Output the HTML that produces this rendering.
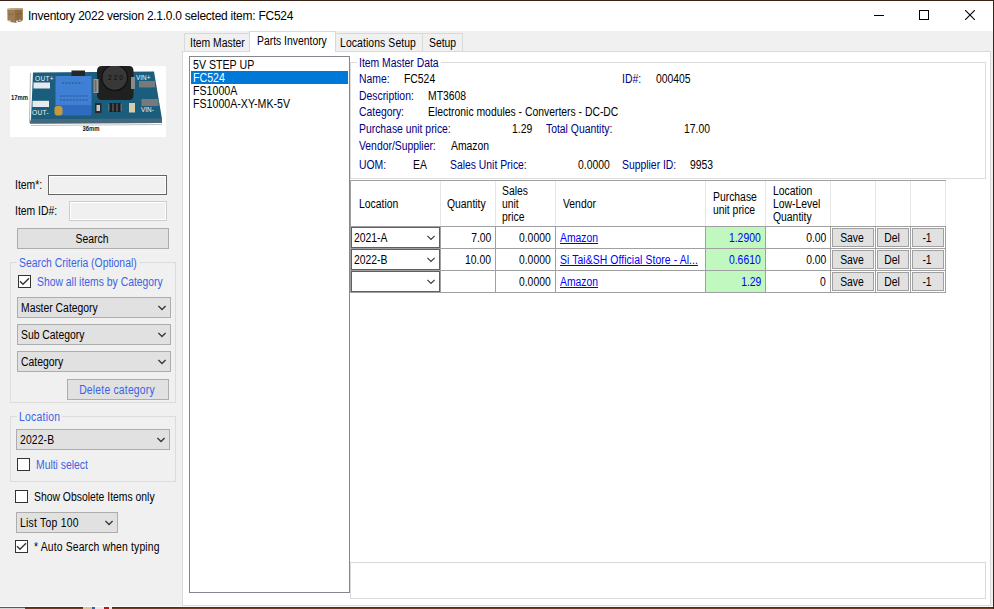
<!DOCTYPE html>
<html><head><meta charset="utf-8">
<style>
*{margin:0;padding:0;box-sizing:border-box}
html,body{width:994px;height:609px;overflow:hidden;background:#4a2a18;font-family:"Liberation Sans",sans-serif;font-size:12px;color:#000}
.a{position:absolute}
.t{position:absolute;white-space:nowrap;line-height:13px;letter-spacing:0px;transform:scaleX(0.865);transform-origin:0 0}
.r{transform-origin:100% 0}
.c{transform-origin:50% 0}
.blue{color:#3b63e3}
.nav{color:#000080}
.lnk{color:#0000ff;text-decoration:underline}
.blu2{color:#0000ff}
</style></head><body>
<div class="a" style="left:0;top:607px;width:994px;height:2px;background:linear-gradient(#4a2410,#7a4424)"></div>
<div class="a" style="left:0;top:607px;width:25px;height:2px;background:linear-gradient(#5a5a5a 50%,#d4d4d4 50%)"></div>
<div class="a" style="left:83px;top:607px;width:9px;height:2px;background:#d8c890"></div>
<div class="a" style="left:92px;top:607px;width:3px;height:2px;background:#3060b0"></div>
<div class="a" style="left:95px;top:607px;width:9px;height:2px;background:#e8e8e8"></div>
<div class="a" style="left:109px;top:607px;width:3px;height:2px;background:#e8e8e8"></div>
<div class="a" style="left:104px;top:607px;width:5px;height:2px;background:#c01010"></div>
<div class="a" style="left:0;top:0;width:994px;height:1px;background:#3a2418"></div>
<div class="a" style="left:993px;top:0;width:1px;height:609px;background:#3a2418"></div>
<div class="a" style="left:0;top:1px;width:993px;height:30px;background:#fff"></div>
<div class="a" style="left:0;top:31px;width:993px;height:576px;background:#f0f0f0"></div>
<div class="a" style="left:0;top:606px;width:993px;height:1px;background:#fafafa"></div>
<svg class="a" style="left:4px;top:5px" width="22" height="21" viewBox="4 5 22 21">
 <path d="M7.3 9 L11 8.3 L19 8 L22.6 8.5 L22.6 20 L21 21.5 L18 22 L15 22.8 L10 22 L7.5 20.5 Z" fill="#9d7d52"/>
 <path d="M15 8.5 L22.6 8.5 L22.6 20 L21 21.5 L15 22.5 Z" fill="#8d6c45"/>
 <path d="M7.5 8.5 L22.5 8.3 L22.5 9.6 L7.5 9.8 Z" fill="#cdb690"/>
 <rect x="8.5" y="20.3" width="2" height="1.5" fill="#fff" opacity="0.8"/>
 <rect x="16" y="20.6" width="2.2" height="1.4" fill="#fff" opacity="0.8"/>
 <rect x="19.2" y="19.6" width="1.5" height="1.6" fill="#fff" opacity="0.7"/>
 <path d="M9 14.3 h1.2 M12 14.3 h1 M17 14.3 h1.2 M20 13.5 h1" stroke="#5a4020" stroke-width="0.8"/>
</svg>
<div class="t" style="left:28px;top:9.3px;font-size:12px;letter-spacing:-0.255px;line-height:15px;transform:none">Inventory 2022 version 2.1.0.0 selected item: FC524</div>
<div class="a" style="left:874px;top:15px;width:10px;height:1px;background:#000"></div>
<div class="a" style="left:919px;top:10px;width:10px;height:10px;border:1px solid #000"></div>
<svg class="a" style="left:965px;top:10px" width="10" height="10" viewBox="0 0 10 10"><path d="M0 0L10 10M10 0L0 10" stroke="#000" stroke-width="1.1"/></svg>
<svg class="a" style="left:10px;top:66px" width="156" height="71" viewBox="10 66 156 71">
  <rect x="10" y="66" width="156" height="71" fill="#fff"/>
  <path d="M33 72.5 L154 71.5 L162 119 L162 123 L30 123.5 L31 119 Z" fill="#1b5d7c"/>
  <path d="M31 119 L162 118.5 L162 123 L30 123.5 Z" fill="#45687a"/>
  <path d="M30.5 73 L29.5 123" stroke="#888" stroke-width="0.6"/>
  <path d="M31 125.5 L162 124.5" stroke="#999" stroke-width="0.6"/>
  <rect x="71.5" y="70.5" width="13.5" height="6.5" fill="#262626"/>
  <rect x="55.5" y="76" width="36" height="30" fill="#3f80d4"/>
  <rect x="55.5" y="105" width="36" height="10.5" fill="#2f6bbf"/>
  <path d="M62 83 h20 M60 96 h28 M60 100 h28" stroke="#27508f" stroke-width="1.2" stroke-dasharray="2 1.2"/>
  <rect x="54.5" y="106" width="8" height="9.5" rx="3" fill="#c49a3c"/>
  <path d="M97 71 Q97 66 102 66 L129 66 Q133.5 66 133.5 71 L133.5 95 Q133.5 100 129 100 L102 100 Q97 100 97 95 Z" fill="#202020"/>
  <rect x="93.5" y="79" width="5" height="14" fill="#9a9a9a"/>
  <rect x="94.5" y="80" width="2" height="12" fill="#6e6e6e"/>
  <rect x="131" y="77" width="4" height="12" fill="#8a8a8a"/>
  <circle cx="114.7" cy="77.7" r="12.8" fill="#383838" stroke="#101010" stroke-width="1.2"/>
  <text x="108" y="79.8" font-size="6.6" fill="#0a0a0a" font-family="Liberation Sans" textLength="15">220</text>
  <rect x="139" y="81" width="16" height="6.5" fill="#767a7a"/>
  <rect x="141.5" y="99" width="17" height="7" fill="#767a7a"/>
  <rect x="33.5" y="82.5" width="16.5" height="6" fill="#e6eaee"/>
  <rect x="32.5" y="100.8" width="16.5" height="6.2" fill="#e6eaee"/>
  <rect x="95" y="103" width="6.5" height="10" fill="#2a2a2a"/>
  <rect x="96.5" y="105" width="3.5" height="6" fill="#c8c8c8"/>
  <rect x="109" y="103" width="12" height="9" fill="#1e1e1e"/>
  <path d="M109 103.5 v8 M113 103.5 v8 M117 103.5 v8 M121 103.5 v8" stroke="#aaa" stroke-width="0.6"/>
  <rect x="129" y="103" width="6" height="9.5" fill="#d8cca8"/>
  <text x="35" y="81.3" font-size="6.6" fill="#f2f2f2" font-family="Liberation Sans" letter-spacing="0.3">OUT+</text>
  <text x="32" y="115" font-size="6.6" fill="#f2f2f2" font-family="Liberation Sans" letter-spacing="0.3">OUT-</text>
  <text x="136" y="80.3" font-size="6.4" fill="#f2f2f2" font-family="Liberation Sans">VIN+</text>
  <text x="141" y="112.2" font-size="6.4" fill="#f2f2f2" font-family="Liberation Sans">VIN-</text>
  <text x="11" y="99.8" font-size="6.4" font-weight="bold" fill="#111" font-family="Liberation Sans" textLength="17" lengthAdjust="spacingAndGlyphs">17mm</text>
  <text x="82.5" y="131.3" font-size="6.4" font-weight="bold" fill="#111" font-family="Liberation Sans" textLength="17" lengthAdjust="spacingAndGlyphs">36mm</text>
</svg>
<div class="t " style="left:15px;top:179.34px;">Item*:</div>
<div class="a" style="left:48px;top:175px;width:119px;height:20px;border:1px solid #646464;background:#f0f0f0;box-shadow:inset 0 0 0 1px #fff"></div>
<div class="t " style="left:15px;top:205.34px;">Item ID#:</div>
<div class="a" style="left:69px;top:201px;width:98px;height:20px;border:1px solid #cccccc;background:#f0f0f0;box-shadow:inset 0 0 0 1px #fff"></div>
<div class="a" style="left:17px;top:228px;width:152px;height:21px;background:#e1e1e1;border:1px solid #adadad"></div>
<div class="t c " style="left:15.8px;width:152px;text-align:center;top:233.34px">Search</div>
<div class="a" style="left:10px;top:262px;width:166px;height:141px;border:1px solid #dcdcdc"></div>
<div class="a" style="left:17px;top:256px;width:122px;height:13px;background:#f0f0f0"></div>
<div class="t blue" style="left:19px;top:257.34px;">Search Criteria (Optional)</div>
<div class="a" style="left:18px;top:275px;width:13px;height:13px;border:1px solid #333;background:#fff"></div>
<svg class="a" style="left:18px;top:275px" width="13" height="13" viewBox="0 0 13 13"><path d="M2 6.3L5 9.3L11 3.2" stroke="#333" stroke-width="1.4" fill="none"/></svg>
<div class="t blue" style="left:37px;top:276.34px;">Show all items by Category</div>
<div class="a" style="left:17px;top:297px;width:154px;height:21px;background:#e1e1e1;border:1px solid #adadad"></div>
<div class="t " style="left:21px;top:302.34px;">Master Category</div>
<svg class="a" style="left:158px;top:305px" width="9" height="6" viewBox="0 0 9 6"><path d="M0.4 0.9L4 4.5L7.6 0.9" stroke="#383838" stroke-width="1.35" fill="none"/></svg>
<div class="a" style="left:17px;top:324px;width:154px;height:21px;background:#e1e1e1;border:1px solid #adadad"></div>
<div class="t " style="left:21px;top:329.34px;">Sub Category</div>
<svg class="a" style="left:158px;top:332px" width="9" height="6" viewBox="0 0 9 6"><path d="M0.4 0.9L4 4.5L7.6 0.9" stroke="#383838" stroke-width="1.35" fill="none"/></svg>
<div class="a" style="left:17px;top:351px;width:154px;height:21px;background:#e1e1e1;border:1px solid #adadad"></div>
<div class="t " style="left:21px;top:356.34px;">Category</div>
<svg class="a" style="left:158px;top:359px" width="9" height="6" viewBox="0 0 9 6"><path d="M0.4 0.9L4 4.5L7.6 0.9" stroke="#383838" stroke-width="1.35" fill="none"/></svg>
<div class="a" style="left:67px;top:379px;width:102px;height:21px;background:#e1e1e1;border:1px solid #adadad"></div>
<div class="t c blue" style="left:65.8px;width:102px;text-align:center;top:384.34px"><span style="letter-spacing:0.23px">Delete category</span></div>
<div class="a" style="left:10px;top:416px;width:166px;height:66px;border:1px solid #dcdcdc"></div>
<div class="a" style="left:17px;top:410px;width:45px;height:13px;background:#f0f0f0"></div>
<div class="t blue" style="left:19px;top:411.34px;letter-spacing:0.29px">Location</div>
<div class="a" style="left:16px;top:429px;width:154px;height:21px;background:#e1e1e1;border:1px solid #adadad"></div>
<div class="t " style="left:20px;top:434.34px;"><span style="letter-spacing:0.15px">2022-B</span></div>
<svg class="a" style="left:157px;top:437px" width="9" height="6" viewBox="0 0 9 6"><path d="M0.4 0.9L4 4.5L7.6 0.9" stroke="#383838" stroke-width="1.35" fill="none"/></svg>
<div class="a" style="left:17px;top:458px;width:13px;height:13px;border:1px solid #333;background:#fff"></div>
<div class="t blue" style="left:36px;top:459.34px;">Multi select</div>
<div class="a" style="left:15px;top:490px;width:13px;height:13px;border:1px solid #333;background:#fff"></div>
<div class="t " style="left:34px;top:491.34px;">Show Obsolete Items only</div>
<div class="a" style="left:16px;top:512px;width:102px;height:21px;background:#e1e1e1;border:1px solid #adadad"></div>
<div class="t " style="left:20px;top:517.34px;"><span style="letter-spacing:0.29px">List Top 100</span></div>
<svg class="a" style="left:105px;top:520px" width="9" height="6" viewBox="0 0 9 6"><path d="M0.4 0.9L4 4.5L7.6 0.9" stroke="#383838" stroke-width="1.35" fill="none"/></svg>
<div class="a" style="left:15px;top:540px;width:13px;height:13px;border:1px solid #333;background:#fff"></div>
<svg class="a" style="left:15px;top:540px" width="13" height="13" viewBox="0 0 13 13"><path d="M2 6.3L5 9.3L11 3.2" stroke="#333" stroke-width="1.4" fill="none"/></svg>
<div class="t " style="left:34px;top:541.34px;letter-spacing:0.18px">* Auto Search when typing</div>
<div class="a" style="left:184px;top:33px;width:66px;height:19px;border:1px solid #d9d9d9;background:#f0f0f0"></div>
<div class="t " style="left:190px;top:37.34px;">Item Master</div>
<div class="a" style="left:335px;top:33px;width:88px;height:19px;border:1px solid #d9d9d9;background:#f0f0f0"></div>
<div class="t " style="left:340px;top:37.34px;letter-spacing:0.12px">Locations Setup</div>
<div class="a" style="left:422px;top:33px;width:41px;height:19px;border:1px solid #d9d9d9;background:#f0f0f0"></div>
<div class="t " style="left:429px;top:37.34px;">Setup</div>
<div class="a" style="left:182px;top:51px;width:809px;height:555px;border:1px solid #d9d9d9;background:#fff"></div>
<div class="a" style="left:249px;top:31px;width:87px;height:21px;border:1px solid #d9d9d9;border-bottom:none;background:#fff"></div>
<div class="t " style="left:257px;top:35.34px;">Parts Inventory</div>
<div class="a" style="left:189px;top:56px;width:161px;height:537px;border:1px solid #828790;background:#fff"></div>
<div class="a" style="left:191px;top:71px;width:157px;height:13px;background:#0078d7"></div>
<div class="t " style="left:193px;top:59.17px;font-size:12.5px;transform:scaleX(0.85);color:#000">5V STEP UP</div>
<div class="t " style="left:193px;top:72.17px;font-size:12.5px;transform:scaleX(0.85);color:#fff">FC524</div>
<div class="t " style="left:193px;top:85.17px;font-size:12.5px;transform:scaleX(0.85);color:#000">FS1000A</div>
<div class="t " style="left:193px;top:98.17px;font-size:12.5px;transform:scaleX(0.85);color:#000">FS1000A-XY-MK-5V</div>
<div class="a" style="left:350px;top:62px;width:636px;height:117px;border:1px solid #dcdcdc"></div>
<div class="a" style="left:357px;top:56px;width:84px;height:13px;background:#fff"></div>
<div class="t nav" style="left:359px;top:57.34px;">Item Master Data</div>
<div class="t nav" style="left:359px;top:73.34px;">Name:</div>
<div class="t " style="left:404px;top:73.34px;">FC524</div>
<div class="t nav" style="left:622px;top:73.34px;">ID#:</div>
<div class="t " style="left:656px;top:73.34px;">000405</div>
<div class="t nav" style="left:359px;top:90.34px;">Description:</div>
<div class="t " style="left:428px;top:90.34px;">MT3608</div>
<div class="t nav" style="left:359px;top:106.34px;">Category:</div>
<div class="t " style="left:428px;top:106.34px;">Electronic modules - Converters - DC-DC</div>
<div class="t nav" style="left:359px;top:123.34px;">Purchase unit price:</div>
<div class="t " style="left:512px;top:123.34px;">1.29</div>
<div class="t nav" style="left:546px;top:123.34px;">Total Quantity:</div>
<div class="t " style="left:684px;top:123.34px;">17.00</div>
<div class="t nav" style="left:359px;top:140.34px;">Vendor/Supplier:</div>
<div class="t " style="left:451px;top:140.34px;">Amazon</div>
<div class="t nav" style="left:359px;top:159.34px;">UOM:</div>
<div class="t " style="left:413px;top:159.34px;">EA</div>
<div class="t nav" style="left:450px;top:159.34px;">Sales Unit Price:</div>
<div class="t " style="left:578px;top:159.34px;">0.0000</div>
<div class="t nav" style="left:622px;top:159.34px;">Supplier ID:</div>
<div class="t " style="left:690px;top:159.34px;">9953</div>
<div class="a" style="left:350px;top:180px;width:596px;height:113px;background:#fff"></div>
<div class="a" style="left:350px;top:180px;width:596px;height:1px;background:#a0a0a0"></div>
<div class="a" style="left:350px;top:180px;width:1px;height:113px;background:#a0a0a0"></div>
<div class="a" style="left:440px;top:181px;width:1px;height:45px;background:#e6e6e6"></div>
<div class="a" style="left:495px;top:181px;width:1px;height:45px;background:#e6e6e6"></div>
<div class="a" style="left:555px;top:181px;width:1px;height:45px;background:#e6e6e6"></div>
<div class="a" style="left:705px;top:181px;width:1px;height:45px;background:#e6e6e6"></div>
<div class="a" style="left:765px;top:181px;width:1px;height:45px;background:#e6e6e6"></div>
<div class="a" style="left:830px;top:181px;width:1px;height:45px;background:#e6e6e6"></div>
<div class="a" style="left:875px;top:181px;width:1px;height:45px;background:#e6e6e6"></div>
<div class="a" style="left:910px;top:181px;width:1px;height:45px;background:#e6e6e6"></div>
<div class="a" style="left:945px;top:181px;width:1px;height:45px;background:#e6e6e6"></div>
<div class="a" style="left:350px;top:226px;width:596px;height:1px;background:#a0a0a0"></div>
<div class="a" style="left:350px;top:248px;width:596px;height:1px;background:#a0a0a0"></div>
<div class="a" style="left:350px;top:270px;width:596px;height:1px;background:#a0a0a0"></div>
<div class="a" style="left:350px;top:292px;width:596px;height:1px;background:#a0a0a0"></div>
<div class="a" style="left:440px;top:226px;width:1px;height:67px;background:#a0a0a0"></div>
<div class="a" style="left:495px;top:226px;width:1px;height:67px;background:#a0a0a0"></div>
<div class="a" style="left:555px;top:226px;width:1px;height:67px;background:#a0a0a0"></div>
<div class="a" style="left:705px;top:226px;width:1px;height:67px;background:#a0a0a0"></div>
<div class="a" style="left:765px;top:226px;width:1px;height:67px;background:#a0a0a0"></div>
<div class="a" style="left:830px;top:226px;width:1px;height:67px;background:#a0a0a0"></div>
<div class="a" style="left:875px;top:226px;width:1px;height:67px;background:#a0a0a0"></div>
<div class="a" style="left:910px;top:226px;width:1px;height:67px;background:#a0a0a0"></div>
<div class="a" style="left:945px;top:226px;width:1px;height:67px;background:#a0a0a0"></div>
<div class="t " style="left:359px;top:198.34px;">Location</div>
<div class="t " style="left:447px;top:198.34px;">Quantity</div>
<div class="t " style="left:502px;top:185.34px;">Sales</div>
<div class="t " style="left:502px;top:198.34px;">unit</div>
<div class="t " style="left:502px;top:211.34px;">price</div>
<div class="t " style="left:563px;top:198.34px;">Vendor</div>
<div class="t " style="left:713px;top:191.34px;">Purchase</div>
<div class="t " style="left:713px;top:204.34px;">unit price</div>
<div class="t " style="left:773px;top:185.34px;">Location</div>
<div class="t " style="left:773px;top:198.34px;">Low-Level</div>
<div class="t " style="left:773px;top:211.34px;">Quantity</div>
<div class="a" style="left:706px;top:227px;width:59px;height:21px;background:#c0f8c0"></div>
<div class="a" style="left:351px;top:227px;width:89px;height:21px;border:1px solid #0078d7;background:#fff"></div>
<div class="t " style="left:354px;top:232.34px;">2021-A</div>
<svg class="a" style="left:427px;top:235px" width="9" height="6" viewBox="0 0 9 6"><path d="M0.4 0.9L4 4.5L7.6 0.9" stroke="#383838" stroke-width="1.15" fill="none"/></svg>
<div class="t r " style="right:503px;top:232.34px">7.00</div>
<div class="t r " style="right:443px;top:232.34px">0.0000</div>
<div class="t lnk" style="left:560px;top:232.34px;">Amazon</div>
<div class="t r blu2" style="right:233px;top:232.34px">1.2900</div>
<div class="t r " style="right:168px;top:232.34px">0.00</div>
<div class="a" style="left:832px;top:228px;width:42px;height:19px;background:#e1e1e1;border:1px solid #a0a0a0"></div>
<div class="t c " style="left:830.8px;width:42px;text-align:center;top:232.34px">Save</div>
<div class="a" style="left:877px;top:228px;width:32px;height:19px;background:#e1e1e1;border:1px solid #a0a0a0"></div>
<div class="t c " style="left:875.8px;width:32px;text-align:center;top:232.34px">Del</div>
<div class="a" style="left:912px;top:228px;width:32px;height:19px;background:#e1e1e1;border:1px solid #a0a0a0"></div>
<div class="t c " style="left:910.8px;width:32px;text-align:center;top:232.34px">-1</div>
<div class="a" style="left:706px;top:249px;width:59px;height:21px;background:#c0f8c0"></div>
<div class="a" style="left:351px;top:249px;width:89px;height:21px;border:1px solid #0078d7;background:#fff"></div>
<div class="t " style="left:354px;top:254.34px;">2022-B</div>
<svg class="a" style="left:427px;top:257px" width="9" height="6" viewBox="0 0 9 6"><path d="M0.4 0.9L4 4.5L7.6 0.9" stroke="#383838" stroke-width="1.15" fill="none"/></svg>
<div class="t r " style="right:503px;top:254.34px">10.00</div>
<div class="t r " style="right:443px;top:254.34px">0.0000</div>
<div class="t lnk" style="left:560px;top:254.34px;"><span style="letter-spacing:0.1px">Si Tai&amp;SH Official Store - Al...</span></div>
<div class="t r blu2" style="right:233px;top:254.34px">0.6610</div>
<div class="t r " style="right:168px;top:254.34px">0.00</div>
<div class="a" style="left:832px;top:250px;width:42px;height:19px;background:#e1e1e1;border:1px solid #a0a0a0"></div>
<div class="t c " style="left:830.8px;width:42px;text-align:center;top:254.34px">Save</div>
<div class="a" style="left:877px;top:250px;width:32px;height:19px;background:#e1e1e1;border:1px solid #a0a0a0"></div>
<div class="t c " style="left:875.8px;width:32px;text-align:center;top:254.34px">Del</div>
<div class="a" style="left:912px;top:250px;width:32px;height:19px;background:#e1e1e1;border:1px solid #a0a0a0"></div>
<div class="t c " style="left:910.8px;width:32px;text-align:center;top:254.34px">-1</div>
<div class="a" style="left:706px;top:271px;width:59px;height:21px;background:#c0f8c0"></div>
<div class="a" style="left:351px;top:271px;width:89px;height:21px;border:1px solid #0078d7;background:#fff"></div>
<svg class="a" style="left:427px;top:279px" width="9" height="6" viewBox="0 0 9 6"><path d="M0.4 0.9L4 4.5L7.6 0.9" stroke="#383838" stroke-width="1.15" fill="none"/></svg>
<div class="t r " style="right:443px;top:276.34px">0.0000</div>
<div class="t lnk" style="left:560px;top:276.34px;">Amazon</div>
<div class="t r blu2" style="right:233px;top:276.34px">1.29</div>
<div class="t r " style="right:168px;top:276.34px">0</div>
<div class="a" style="left:832px;top:272px;width:42px;height:19px;background:#e1e1e1;border:1px solid #a0a0a0"></div>
<div class="t c " style="left:830.8px;width:42px;text-align:center;top:276.34px">Save</div>
<div class="a" style="left:877px;top:272px;width:32px;height:19px;background:#e1e1e1;border:1px solid #a0a0a0"></div>
<div class="t c " style="left:875.8px;width:32px;text-align:center;top:276.34px">Del</div>
<div class="a" style="left:912px;top:272px;width:32px;height:19px;background:#e1e1e1;border:1px solid #a0a0a0"></div>
<div class="t c " style="left:910.8px;width:32px;text-align:center;top:276.34px">-1</div>
<div class="a" style="left:350px;top:562px;width:636px;height:37px;border:1px solid #d9d9d9;background:#fff"></div>
</body></html>
